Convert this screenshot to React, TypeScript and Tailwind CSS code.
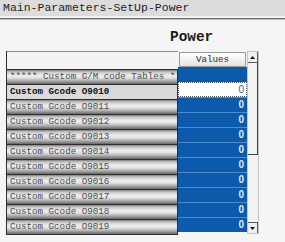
const rows = [
  "O9010",
  "O9011",
  "O9012",
  "O9013",
  "O9014",
  "O9015",
  "O9016",
  "O9017",
  "O9018",
  "O9019",
];

const chrome =
  "bg-[linear-gradient(to_bottom,#7e7e7e_0%,#c4c4c4_14%,#ededed_38%,#e4e4e4_55%,#a4a4a4_80%,#666666_100%)]";

const App = () => {
  return (
    <div className="w-[285px] h-[242px] bg-[#f5f5f5] overflow-hidden font-['Liberation_Mono',monospace]">
      <div className="h-[16px] bg-[#dcdcdc] pl-[3px] text-[11.5px] leading-[16px] text-[#1e1e1e]">
        Main-Parameters-SetUp-Power
      </div>
      <div className="mt-[2px] h-px bg-[#6e6e6e]" />
      <div className="h-px bg-[#bdbdbd]" />

      <div className="mt-[9px] h-[16px] pl-[170px] text-[14.4px] leading-[16px] font-bold text-[#1a1a1a]">
        Power
      </div>

      <div className="mt-[6px] ml-[6px] flex items-start">
        {/* names */}
        <div className="w-[172px] flex flex-col border-l border-[#2e2e2e]">
          <div className="h-[18px] bg-[#f3f3f3] border-t border-[#8c8c8c]" />
          <div
            className={`h-[15px] border-t border-r border-[#2e2e2e] ${chrome} pl-[3px] text-[9.2px] leading-[14px] text-[#4c4c4c] whitespace-nowrap overflow-hidden`}
          >
            ***** Custom G/M code Tables *
          </div>
          {rows.map((r, i) => (
            <div
              key={r}
              className={`h-[15px] border-t border-r border-[#2e2e2e] pl-[3px] text-[9.2px] leading-[14px] whitespace-nowrap ${
                i === 0
                  ? "bg-[repeating-conic-gradient(#d2d2d2_0_25%,#e2e2e2_0_50%)] bg-[length:2px_2px] text-[#111] font-bold"
                  : `${chrome} text-[#4c4c4c]`
              } ${i === rows.length - 1 ? "border-b h-[16px]" : ""}`}
            >
              Custom Gcode {r}
            </div>
          ))}
        </div>

        {/* values */}
        <div className="w-[69px] mt-[1px] flex flex-col">
          <div className="h-[15px] mx-[1px] border border-[#9a9a9a] bg-[linear-gradient(to_bottom,#ffffff,#e2e2e2)] text-center text-[9.2px] leading-[13px] text-[#2a2a2a]">
            Values
          </div>
          <div className="h-[15px] bg-[#0b5aab]" />
          <div className="h-[15px] bg-white border border-dotted border-[#555] pr-[2px] text-right font-['Liberation_Sans',sans-serif] text-[10px] leading-[13px] text-[#1f5fa8]">
            0
          </div>
          {rows.slice(1).map((r) => (
            <div
              key={r}
              className="h-[15px] bg-[#0b5aab] border-t border-[#4f8ccd] pr-[3px] text-right font-['Liberation_Sans',sans-serif] font-bold text-[10px] leading-[14px] text-[#dcecff]"
            >
              0
            </div>
          ))}
        </div>

        {/* scrollbar */}
        <div className="w-[12px] h-[183px] flex flex-col bg-[#f2f2f2] border border-[#c4c4c4]">
          <div className="h-[11px] flex items-center justify-center border-b border-r border-[#5a5a5a] bg-[#f0f0f0]">
            <svg width="5" height="3" viewBox="0 0 5 3">
              <path d="M2.5 0L5 3H0z" fill="#111" />
            </svg>
          </div>
          <div className="h-[92px] border-r border-b border-[#404040] bg-[#f2f2f2]" />
          <div className="flex-1" />
          <div className="h-[11px] flex items-center justify-center border-r border-t border-[#5a5a5a] bg-[#f0f0f0]">
            <svg width="5" height="3" viewBox="0 0 5 3">
              <path d="M0 0H5L2.5 3z" fill="#111" />
            </svg>
          </div>
        </div>
      </div>
    </div>
  );
};

export default App;
